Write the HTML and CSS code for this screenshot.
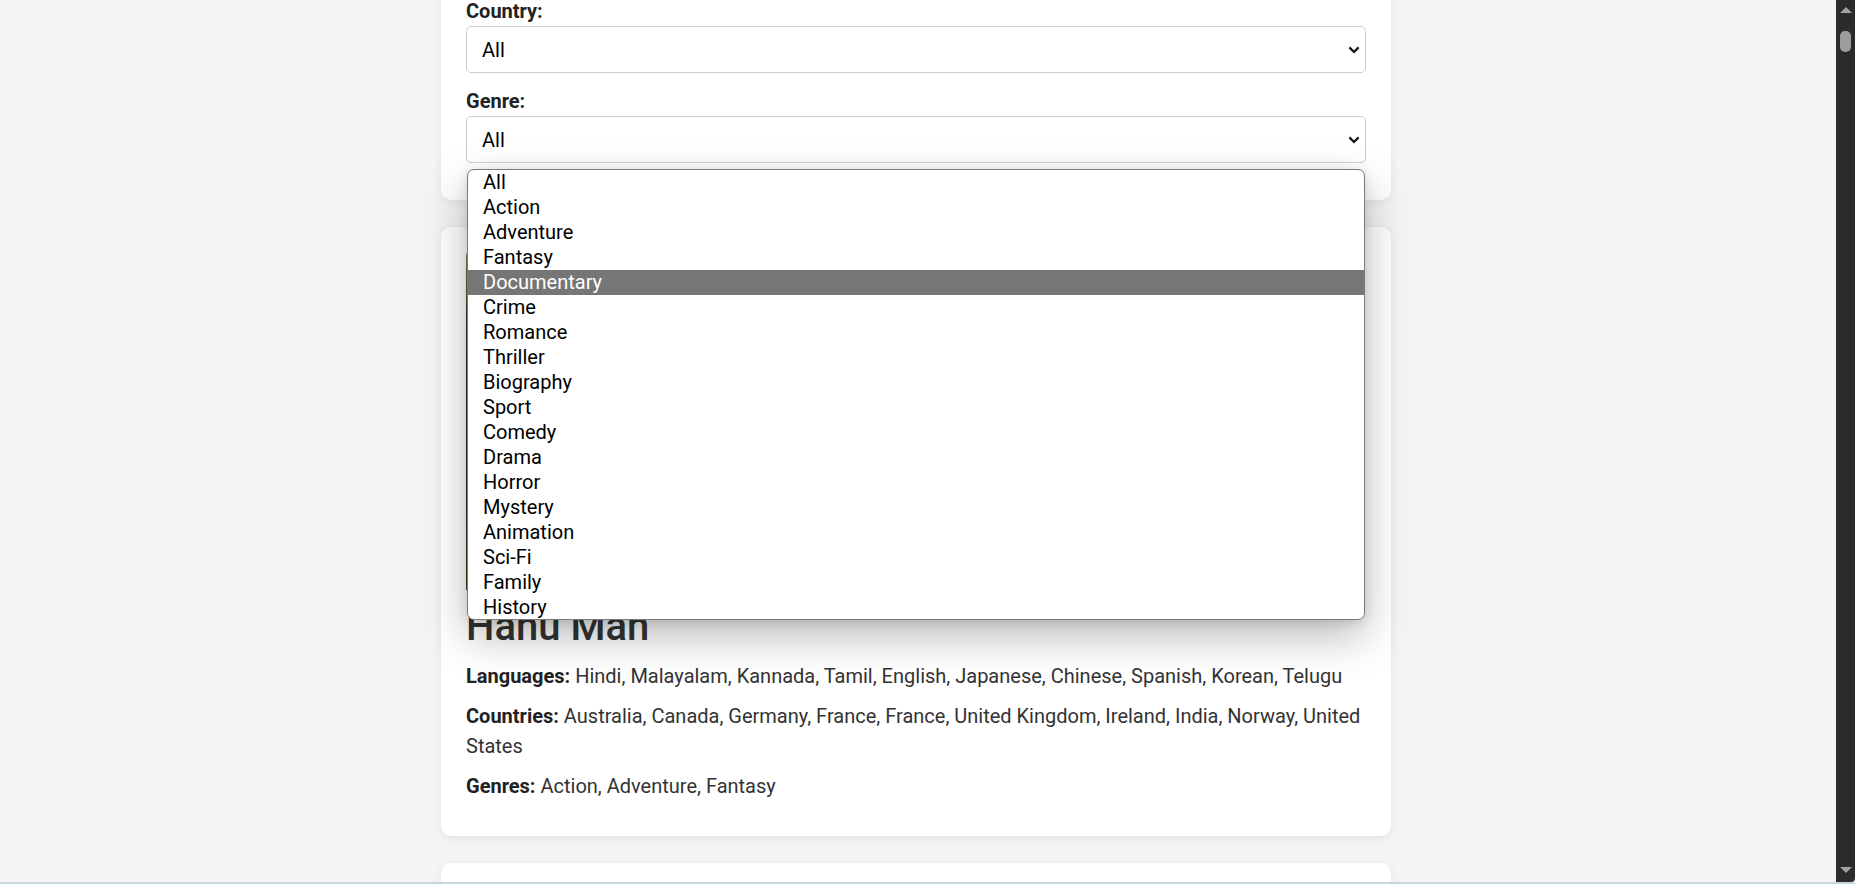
FILE: index.html
```html
<!DOCTYPE html>
<html lang="en">
<head>
<meta charset="utf-8">
<title>Movies</title>
<link rel="stylesheet" href="styles.css">
</head>
<body>
<div class="window">
  <div class="viewport">
    <div class="container">
      <section class="card filters">
        <div class="field">
          <label class="label">Country:</label>
          <div class="select">
            <span>All</span>
            <svg class="chev" width="12" height="8" viewBox="0 0 12 8"><path d="M1.4 1.4 L6 6 L10.6 1.4" fill="none" stroke="#111" stroke-width="2.2"/></svg>
          </div>
        </div>
        <div class="field genre">
          <label class="label">Genre:</label>
          <div class="select">
            <span>All</span>
            <svg class="chev" width="12" height="8" viewBox="0 0 12 8"><path d="M1.4 1.4 L6 6 L10.6 1.4" fill="none" stroke="#111" stroke-width="2.2"/></svg>
          </div>
          <ul class="dropdown">
            <li>All</li>
            <li>Action</li>
            <li>Adventure</li>
            <li>Fantasy</li>
            <li class="selected">Documentary</li>
            <li>Crime</li>
            <li>Romance</li>
            <li>Thriller</li>
            <li>Biography</li>
            <li>Sport</li>
            <li>Comedy</li>
            <li>Drama</li>
            <li>Horror</li>
            <li>Mystery</li>
            <li>Animation</li>
            <li>Sci-Fi</li>
            <li>Family</li>
            <li>History</li>
          </ul>
        </div>
      </section>

      <article class="card movie">
        <div class="poster"></div>
        <h2 class="title">Hanu Man</h2>
        <p><b>Languages:</b> Hindi, Malayalam, Kannada, Tamil, English, Japanese, Chinese, Spanish, Korean, Telugu</p>
        <p><b>Countries:</b> Australia, Canada, Germany, France, France, United Kingdom, Ireland, India, Norway, United States</p>
        <p class="last"><b>Genres:</b> Action, Adventure, Fantasy</p>
      </article>

      <article class="card movie next"></article>
    </div>
  </div>
  <div class="scrollbar">
    <div class="arrow up"></div>
    <div class="thumb"></div>
    <div class="track"></div>
    <div class="arrow down"></div>
  </div>
</div>
<div class="frame-line"></div>
</body>
</html>
```

FILE: styles.css
```css
html, body {
  margin: 0;
  padding: 0;
  height: 100%;
  overflow: hidden;
}

body {
  font-family: Roboto, "Liberation Sans", Arial, sans-serif;
  background: #f4f4f4;
  color: #333;
}

.window {
  display: flex;
  height: 882px;
}

.viewport {
  flex: 1;
  overflow: hidden;
  padding-right: 4px;
}

.container {
  width: 950px;
  margin: 0 auto;
  display: flex;
  flex-direction: column;
  gap: 27px;
}

.card {
  background: #fff;
  border-radius: 10px;
  box-shadow: 0 2px 10px rgba(0, 0, 0, 0.07);
  padding: 25px;
  box-sizing: border-box;
}

.filters {
  border-top-left-radius: 0;
  border-top-right-radius: 0;
  padding-top: 0;
  padding-bottom: 37px;
  display: flex;
  flex-direction: column;
  gap: 17px;
}

.field {
  position: relative;
}

.label {
  display: block;
  font-weight: 700;
  font-size: 20px;
  line-height: 22px;
  margin-bottom: 4px;
  color: #222;
}

.select {
  height: 47px;
  box-sizing: border-box;
  border: 1px solid #cccccc;
  border-radius: 5px;
  display: flex;
  align-items: center;
  justify-content: space-between;
  padding: 0 5px 0 15px;
  font-size: 20px;
  color: #000;
  background: #fff;
}

.chev {
  display: block;
}

.dropdown {
  position: absolute;
  top: calc(100% + 6px);
  left: 1px;
  right: 1px;
  z-index: 10;
  margin: 0;
  padding: 0;
  list-style: none;
  background: #fff;
  border: 1px solid #7a7a7a;
  border-radius: 7px;
  overflow: hidden;
  font-size: 20px;
  color: #000;
  box-shadow: 0 16px 44px rgba(0, 0, 0, 0.28), 0 3px 10px rgba(0, 0, 0, 0.1);
}

.dropdown li {
  height: 25px;
  line-height: 25px;
  padding-left: 15px;
}

.dropdown li:last-child {
  height: 24px;
}

.dropdown .selected {
  background: #767676;
  color: #fff;
}

.movie {
  padding-bottom: 35px;
}

.poster {
  height: 340px;
  width: 240px;
  margin-bottom: 11px;
  border-radius: 4px;
  background: linear-gradient(180deg, #8a7a5a 0%, #3b3324 20%, #2d2a1f 60%, #4a3a26 100%);
}

.title {
  margin: 0 0 10px;
  font-size: 40px;
  line-height: 48px;
  font-weight: 500;
  color: #333;
}

.movie p {
  margin: 0 0 10px;
  font-size: 20px;
  line-height: 30px;
  color: #333;
}

.movie p.last {
  margin-bottom: 0;
}

.movie p b {
  color: #222;
}

.next {
  height: 300px;
}

.scrollbar {
  width: 19px;
  flex: none;
  background: #2b2b2b;
  display: flex;
  flex-direction: column;
  align-items: center;
  border-bottom-right-radius: 4px;
}

.arrow {
  width: 0;
  height: 0;
  border-left: 6px solid transparent;
  border-right: 6px solid transparent;
}

.arrow.up {
  margin-top: 7px;
  border-bottom: 6px solid #a3a3a3;
}

.arrow.down {
  margin-bottom: 9px;
  border-top: 6px solid #a3a3a3;
}

.thumb {
  margin-top: 18px;
  width: 11px;
  height: 21px;
  border-radius: 5px;
  background: #9d9d9d;
}

.track {
  flex: 1;
}

.frame-line {
  height: 2px;
  background: #c6d6dc;
}
```
